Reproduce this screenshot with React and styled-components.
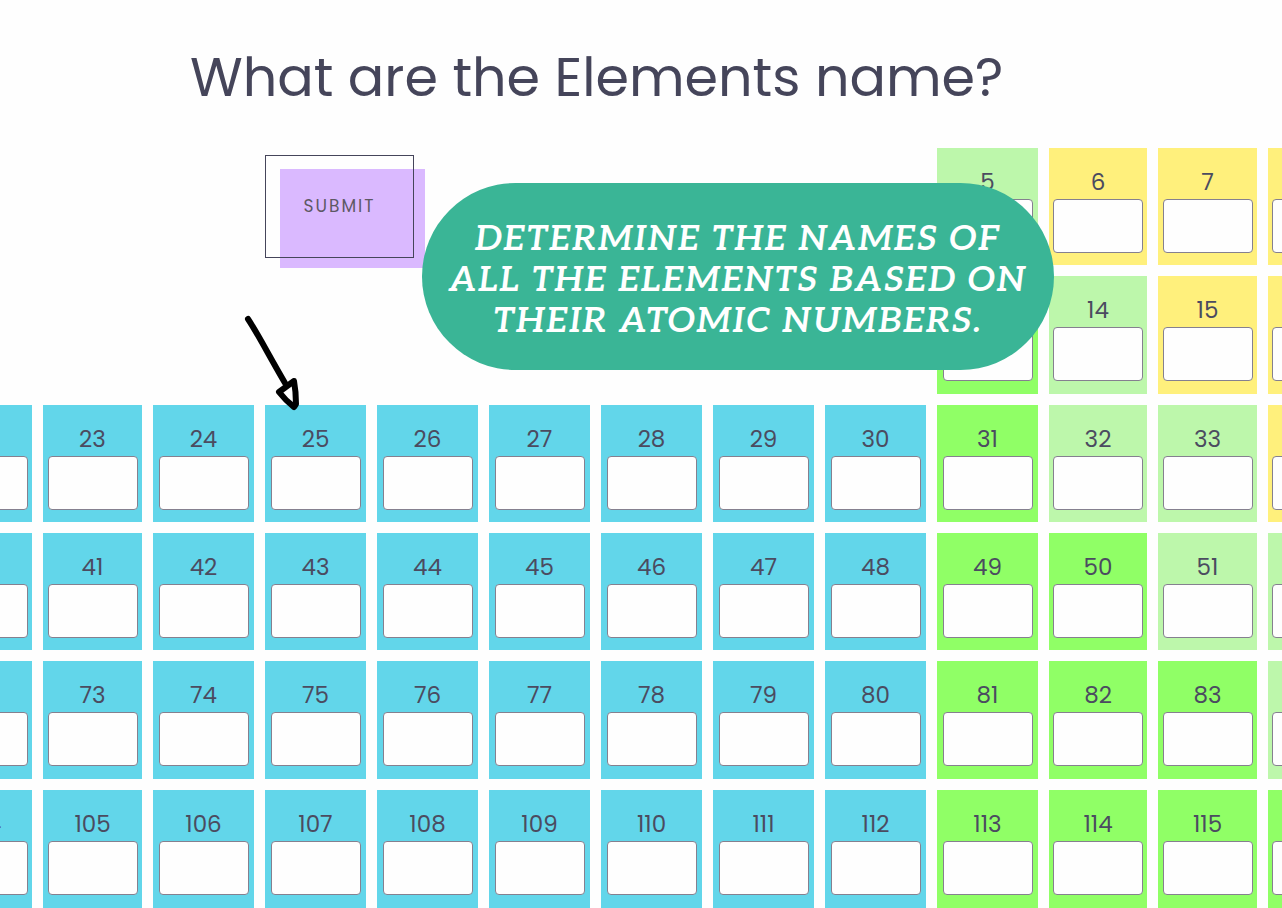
import React from "react";
import styled, { createGlobalStyle } from "styled-components";

const GlobalStyle = createGlobalStyle`
  *, *::before, *::after { box-sizing: border-box; }
  body {
    margin: 0;
    background: #fefefe;
    color: #45455a;
    font-family: Poppins, Inter, sans-serif;
    overflow-x: hidden;
  }
`;

const fills = {
  metal: "#62d6ea",
  poor: "#90ff66",
  metalloid: "#bdf7ab",
  nonmetal: "#fff07c",
};

const Page = styled.main`
  position: relative;
  overflow: hidden;
`;

const Title = styled.h1`
  margin: 0;
  padding: 37px 0 31px 190px;
  font-size: 54px;
  line-height: 80px;
  font-weight: 400;
  white-space: nowrap;
`;

const Board = styled.form`
  display: grid;
  grid-template-columns:
    minmax(0, 32fr) minmax(0, 99fr) repeat(8, minmax(0, 101fr))
    minmax(0, 98fr) minmax(0, 99fr) minmax(0, 14fr);
  grid-template-rows: 117px 118px 117px 117px 118px 118px;
  gap: 11px;
`;

const Cell = styled.div`
  grid-column: ${(p) => p.$col};
  grid-row: ${(p) => p.$row};
  background: ${(p) => fills[p.$kind]};
  display: flex;
  justify-content: ${(p) => p.$align};
  overflow: hidden;
`;

const CellBody = styled.div`
  flex: none;
  width: 98px;
  display: flex;
  flex-direction: column;
  align-items: center;
`;

const Number = styled.label`
  padding-top: 18px;
  color: #4b4b60;
  font-size: 23px;
  line-height: 33px;
`;

const Answer = styled.input`
  width: 90px;
  height: 54px;
  padding: 0 8px;
  border: 1px solid #85808f;
  border-radius: 4px;
  background: #fefefe;
  color: inherit;
  font: inherit;
`;

const SubmitButton = styled.button`
  grid-column: 4 / span 2;
  grid-row: 1 / span 2;
  justify-self: start;
  position: relative;
  z-index: 0;
  width: 149px;
  height: 103px;
  margin-top: 7px;
  padding: 0 0 2px;
  border: 0;
  background: transparent;
  color: #5d5864;
  font: inherit;
  font-size: 17px;
  letter-spacing: 2px;
  text-transform: uppercase;

  &::before {
    content: "";
    position: absolute;
    z-index: -1;
    top: 14px;
    left: 15px;
    width: 145px;
    height: 99px;
    background: #dab9ff;
  }

  &::after {
    content: "";
    position: absolute;
    inset: 0;
    border: 1px solid #45455a;
  }
`;

const Hint = styled.p`
  position: absolute;
  top: 183px;
  left: 422px;
  width: 632px;
  margin: 0;
  padding: 36px 0 28px;
  border-radius: 94px;
  background: #3ab596;
  color: #fff;
  font-family: Aleo, "DejaVu Serif Condensed", "DejaVu Serif", serif;
  font-size: 35px;
  line-height: 41px;
  font-style: italic;
  font-weight: 600;
  letter-spacing: 2px;
  text-align: center;
  text-transform: uppercase;
  white-space: nowrap;
`;

const Arrow = styled.svg`
  position: absolute;
  top: 310px;
  left: 240px;
  width: 64px;
  height: 104px;
`;

const rows = [
  { row: 1, from: 10, cells: [[5, "metalloid"], [6, "nonmetal"], [7, "nonmetal"], [8, "nonmetal"]] },
  { row: 2, from: 10, cells: [[13, "poor"], [14, "metalloid"], [15, "nonmetal"], [16, "nonmetal"]] },
  { row: 3, start: 22, kinds: ["poor", "metalloid", "metalloid", "nonmetal"] },
  { row: 4, start: 40, kinds: ["poor", "poor", "metalloid", "metalloid"] },
  { row: 5, start: 72, kinds: ["poor", "poor", "poor", "metalloid"] },
  { row: 6, start: 104, kinds: ["poor", "poor", "poor", "poor"] },
];

const elements = rows.flatMap(({ row, from, cells, start, kinds }) =>
  cells
    ? cells.map(([number, kind], i) => ({ number, kind, row, col: from + i }))
    : Array.from({ length: 13 }, (_, i) => ({
        number: start + i,
        kind: i < 9 ? "metal" : kinds[i - 9],
        row,
        col: i + 1,
      }))
);

const alignFor = (col) => (col === 1 ? "flex-end" : col === 13 ? "flex-start" : "center");

function Element({ number, kind, row, col }) {
  const id = `element-${number}`;
  return (
    <Cell $row={row} $col={col} $kind={kind} $align={alignFor(col)}>
      <CellBody>
        <Number htmlFor={id}>{number}</Number>
        <Answer id={id} type="text" autoComplete="off" />
      </CellBody>
    </Cell>
  );
}

export default function App() {
  return (
    <>
      <GlobalStyle />
      <Page>
        <Title>What are the Elements name?</Title>
        <Board onSubmit={(e) => e.preventDefault()}>
          <SubmitButton type="submit">Submit</SubmitButton>
          {elements.map((el) => (
            <Element key={el.number} {...el} />
          ))}
        </Board>
        <Hint>
          Determine the names of
          <br />
          all the elements based on
          <br />
          their atomic numbers.
        </Hint>
        <Arrow viewBox="0 0 64 104" fill="none" stroke="#000" strokeLinecap="round" strokeLinejoin="round" aria-hidden="true">
          <path d="M8 9 C18 24 28 44 45 73" strokeWidth="6" />
          <path d="M54 71 L39 82 Q46 91 54 97 L56 94 Q56 82 54 71 Z" fill="#fefefe" strokeWidth="6" />
        </Arrow>
      </Page>
    </>
  );
}
